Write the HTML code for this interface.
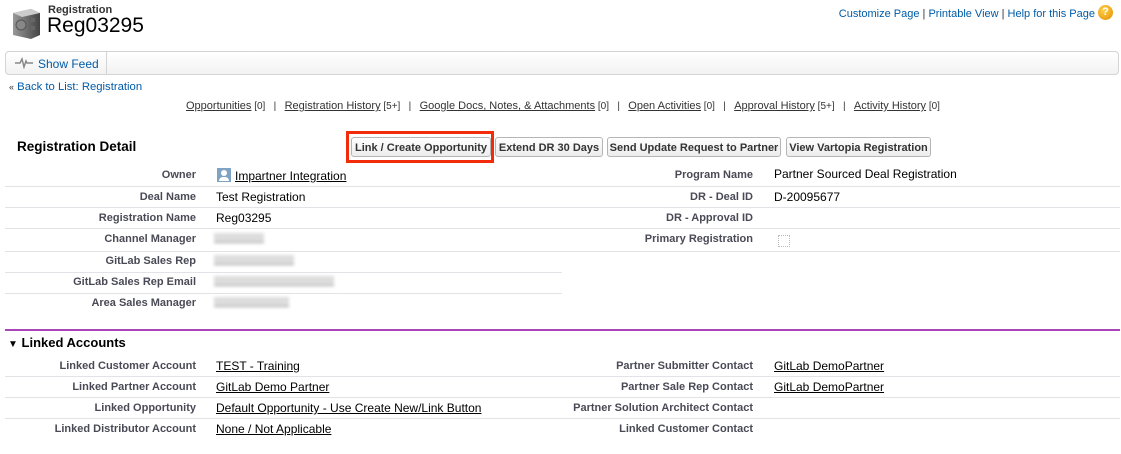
<!DOCTYPE html>
<html><head><meta charset="utf-8"><style>
body{margin:0;width:1121px;height:454px;background:#fff;font-family:"Liberation Sans",Arial,sans-serif;position:relative;overflow:hidden}
.a{position:absolute;white-space:nowrap}
.lbl{position:absolute;font-size:11px;font-weight:bold;color:#4a4a56;text-align:right;white-space:nowrap;margin-top:1px}
.val{position:absolute;font-size:12px;color:#000;white-space:nowrap}
.u{text-decoration:underline}
.ln{position:absolute;height:1px;background:#e3e3e7}
.btn{position:absolute;top:137px;height:20px;border:1px solid #b5b5b5;border-radius:3px;background:linear-gradient(#fff,#ececec);font-size:11px;font-weight:bold;color:#333;line-height:20px;text-align:center;box-sizing:border-box}
.lk{color:#015ba7}
.blur{position:absolute;height:9px;background:#ddd;filter:blur(1.5px);border-bottom:1px solid #999}
</style></head><body>
<svg class="a" style="left:9px;top:6px" width="34" height="34" viewBox="0 0 34 34"><defs><linearGradient id="g" x1="0" x2="1"><stop offset="0" stop-color="#999"/><stop offset="1" stop-color="#444"/></linearGradient></defs><path d="M4 7 L22 3 L31 7 L31 29 L22 33 L4 29Z" fill="url(#g)"/><path d="M4 7 L22 3 L31 7 L13 11Z" fill="#ccc"/><circle cx="12" cy="19" r="5" fill="#888" stroke="#555"/><rect x="22" y="12" width="4" height="4" fill="#666"/><rect x="22" y="20" width="4" height="4" fill="#666"/></svg>
<div class="a" style="left:48px;top:4px;font-size:11px;font-weight:bold;color:#333">Registration</div>
<div class="a" style="left:47px;top:14px;font-size:21px;color:#000">Reg03295</div>
<div class="a lk" style="right:26px;top:8px;font-size:11px">Customize Page <span style="color:#333">|</span> Printable View <span style="color:#333">|</span> Help for this Page</div>
<div class="a" style="left:1098px;top:5px;width:15px;height:15px;border-radius:50%;background:radial-gradient(circle at 40% 35%,#ffd24a,#e38a00);color:#fff;font-size:11px;font-weight:bold;text-align:center;line-height:15px">?</div>
<div class="a" style="left:5px;top:51px;width:1114px;height:24px;border:1px solid #d4d4d4;border-radius:4px;background:linear-gradient(#fff,#f2f2f2);box-sizing:border-box"></div>
<div class="a" style="left:106px;top:52px;width:1px;height:22px;background:#d4d4d4"></div>
<svg class="a" style="left:15px;top:57px" width="18" height="12" viewBox="0 0 18 12"><path d="M0 6H5L7 2L9 10L11 4L12 6H18" fill="none" stroke="#888" stroke-width="1.5"/></svg>
<div class="a lk" style="left:38px;top:57px;font-size:12px">Show Feed</div>
<div class="a lk" style="left:9px;top:81px;font-size:11.3px"><span style="color:#333;font-size:9px">«</span> Back to List: Registration</div>
<div class="a" style="left:186px;top:100px;font-size:10px;color:#333"><span class="u" style="font-size:11px">Opportunities</span> [0] &nbsp; | &nbsp; <span class="u" style="font-size:11px">Registration History</span> [5+] &nbsp; | &nbsp; <span class="u" style="font-size:11px">Google Docs, Notes, &amp; Attachments</span> [0] &nbsp; | &nbsp; <span class="u" style="font-size:11px">Open Activities</span> [0] &nbsp; | &nbsp; <span class="u" style="font-size:11px">Approval History</span> [5+] &nbsp; | &nbsp; <span class="u" style="font-size:11px">Activity History</span> [0]</div>
<div class="a" style="left:17px;top:139px;font-size:13.5px;font-weight:bold;color:#000">Registration Detail</div>
<div class="a" style="left:346px;top:131px;width:148px;height:32px;border:3px solid #f22b0b;box-sizing:border-box"></div>
<div class="btn" style="left:351px;width:140px">Link / Create Opportunity</div>
<div class="btn" style="left:495px;width:108px">Extend DR 30 Days</div>
<div class="btn" style="left:607px;width:174px">Send Update Request to Partner</div>
<div class="btn" style="left:786px;width:145px">View Vartopia Registration</div>

<div class="ln" style="left:5px;top:186px;width:1115px"></div>
<div class="ln" style="left:5px;top:207px;width:1115px"></div>
<div class="ln" style="left:5px;top:228px;width:1115px"></div>
<div class="ln" style="left:5px;top:251px;width:1115px"></div>
<div class="ln" style="left:5px;top:272px;width:557px"></div>
<div class="ln" style="left:5px;top:293px;width:557px"></div>

<div class="lbl" style="right:925px;top:168px">Owner</div>
<div class="a" style="left:217px;top:168px;width:14px;height:14px;background:#7fa3c5"><div style="width:6px;height:6px;border-radius:50%;background:#fff;margin:2px auto 0"></div><div style="width:10px;height:4px;border-radius:4px 4px 0 0;background:#fff;margin:1px auto 0"></div></div>
<div class="val u" style="left:235px;top:169px">Impartner Integration</div>
<div class="lbl" style="right:925px;top:190px">Deal Name</div><div class="val" style="left:216px;top:190px">Test Registration</div>
<div class="lbl" style="right:925px;top:211px">Registration Name</div><div class="val" style="left:216px;top:211px">Reg03295</div>
<div class="lbl" style="right:925px;top:232px">Channel Manager</div><div class="blur" style="left:214px;top:233px;width:50px"></div>
<div class="lbl" style="right:925px;top:254px">GitLab Sales Rep</div><div class="blur" style="left:214px;top:255px;width:80px"></div>
<div class="lbl" style="right:925px;top:275px">GitLab Sales Rep Email</div><div class="blur" style="left:214px;top:276px;width:120px"></div>
<div class="lbl" style="right:925px;top:296px">Area Sales Manager</div><div class="blur" style="left:214px;top:297px;width:75px"></div>

<div class="lbl" style="right:368px;top:168px">Program Name</div><div class="val" style="left:774px;top:167px">Partner Sourced Deal Registration</div>
<div class="lbl" style="right:368px;top:190px">DR - Deal ID</div><div class="val" style="left:774px;top:190px">D-20095677</div>
<div class="lbl" style="right:368px;top:211px">DR - Approval ID</div>
<div class="lbl" style="right:368px;top:232px">Primary Registration</div>
<div class="a" style="left:778px;top:235px;width:10px;height:10px;border:1px dotted #bbb"></div>

<div class="a" style="left:5px;top:329px;width:1115px;height:2px;background:#a846b8"></div>
<div class="a" style="left:8px;top:335px;font-size:13px;font-weight:bold;color:#000"><span style="font-size:10px">▼</span> Linked Accounts</div>
<div class="ln" style="left:5px;top:376px;width:1115px"></div>
<div class="ln" style="left:5px;top:397px;width:1115px"></div>
<div class="ln" style="left:5px;top:418px;width:1115px"></div>
<div class="lbl" style="right:925px;top:359px">Linked Customer Account</div><div class="val u" style="left:216px;top:359px">TEST - Training</div>
<div class="lbl" style="right:925px;top:380px">Linked Partner Account</div><div class="val u" style="left:216px;top:380px">GitLab Demo Partner</div>
<div class="lbl" style="right:925px;top:401px">Linked Opportunity</div><div class="val u" style="left:216px;top:401px">Default Opportunity - Use Create New/Link Button</div>
<div class="lbl" style="right:925px;top:422px">Linked Distributor Account</div><div class="val u" style="left:216px;top:422px">None / Not Applicable</div>
<div class="lbl" style="right:368px;top:359px">Partner Submitter Contact</div><div class="val u" style="left:774px;top:359px">GitLab DemoPartner</div>
<div class="lbl" style="right:368px;top:380px">Partner Sale Rep Contact</div><div class="val u" style="left:774px;top:380px">GitLab DemoPartner</div>
<div class="lbl" style="right:368px;top:401px">Partner Solution Architect Contact</div>
<div class="lbl" style="right:368px;top:422px">Linked Customer Contact</div>
</body></html>
